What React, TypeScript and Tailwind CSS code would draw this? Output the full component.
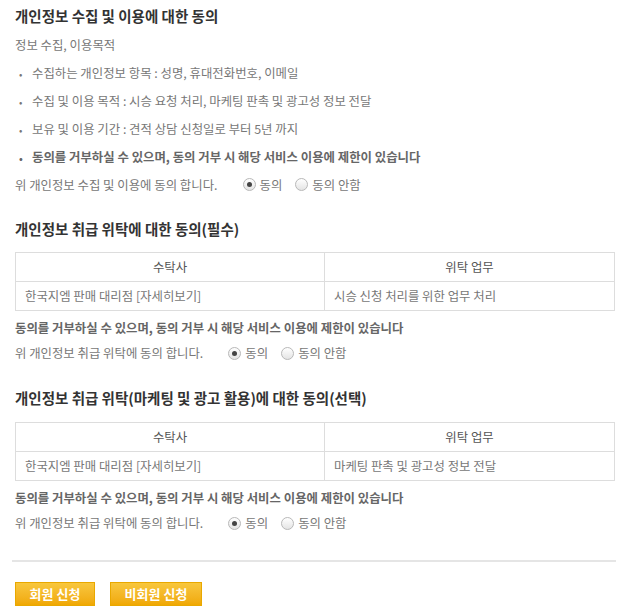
import React, { useState } from 'react'

type Choice = 'yes' | 'no'

function Radio({ checked, label, onClick }: { checked: boolean; label: string; onClick: () => void }) {
  return (
    <button type="button" onClick={onClick} className="flex items-center gap-[4px] text-[#777]">
      <span className="flex h-[13px] w-[13px] items-center justify-center rounded-full border border-[#b8b8b8] bg-gradient-to-b from-white to-[#e4e4e4]">
        {checked && <span className="h-[5px] w-[5px] rounded-full bg-[#444]" />}
      </span>
      <span>{label}</span>
    </button>
  )
}

function AgreeRow({ text, value, onChange, className }: { text: string; value: Choice; onChange: (v: Choice) => void; className: string }) {
  return (
    <div className={`flex items-center text-[12.4px] text-[#777] ${className}`}>
      <span>{text}</span>
      <div className="ml-[25px] flex items-center gap-[13px]">
        <Radio checked={value === 'yes'} label="동의" onClick={() => onChange('yes')} />
        <Radio checked={value === 'no'} label="동의 안함" onClick={() => onChange('no')} />
      </div>
    </div>
  )
}

function TrustTable({ task }: { task: string }) {
  return (
    <table className="w-full border-collapse text-[12.4px]">
      <thead>
        <tr>
          <th className="h-[29px] w-[309px] border border-[#dddddd] font-normal text-[#555]">수탁사</th>
          <th className="h-[29px] border border-[#dddddd] font-normal text-[#555]">위탁 업무</th>
        </tr>
      </thead>
      <tbody>
        <tr>
          <td className="h-[29px] border border-[#dddddd] pl-[9px] text-[#777]">한국지엠 판매 대리점 [자세히보기]</td>
          <td className="h-[29px] border border-[#dddddd] pl-[9px] text-[#777]">{task}</td>
        </tr>
      </tbody>
    </table>
  )
}

export default function App() {
  const [collect, setCollect] = useState<Choice>('yes')
  const [trust, setTrust] = useState<Choice>('yes')
  const [marketing, setMarketing] = useState<Choice>('yes')

  const refuse = '동의를 거부하실 수 있으며, 동의 거부 시 해당 서비스 이용에 제한이 있습니다'

  return (
    <div className="w-[620px] bg-white pr-[5px] pl-[15px] pt-[6px] font-['Noto_Sans_CJK_KR','Noto_Sans',sans-serif]">
      {/* 수집 및 이용 */}
      <h2 className="h-[20px] text-[14.5px] leading-[20px] font-bold text-[#333]">개인정보 수집 및 이용에 대한 동의</h2>
      <p className="mt-[5px] flex h-[28px] items-center text-[12.4px] text-[#777]">정보 수집, 이용목적</p>
      <ul className="text-[12.4px] text-[#777]">
        <li className="flex h-[28px] items-center"><span className="w-[17px] pl-[4px] text-[10px]">•</span>수집하는 개인정보 항목 : 성명, 휴대전화번호, 이메일</li>
        <li className="flex h-[28px] items-center"><span className="w-[17px] pl-[4px] text-[10px]">•</span>수집 및 이용 목적 : 시승 요청 처리, 마케팅 판촉 및 광고성 정보 전달</li>
        <li className="flex h-[28px] items-center"><span className="w-[17px] pl-[4px] text-[10px]">•</span>보유 및 이용 기간 : 견적 상담 신청일로 부터 5년 까지</li>
        <li className="flex h-[28px] items-center font-bold text-[#666]"><span className="w-[17px] pl-[4px] text-[10px]">•</span>{refuse}</li>
      </ul>
      <AgreeRow className="h-[28px]" text="위 개인정보 수집 및 이용에 동의 합니다." value={collect} onChange={setCollect} />

      {/* 취급 위탁 (필수) */}
      <h2 className="mt-[20px] h-[20px] text-[14.5px] leading-[20px] font-bold text-[#333]">개인정보 취급 위탁에 대한 동의(필수)</h2>
      <div className="mt-[13px]">
        <TrustTable task="시승 신청 처리를 위한 업무 처리" />
      </div>
      <p className="mt-[5px] flex h-[25px] items-center text-[12.4px] font-bold text-[#666]">{refuse}</p>
      <AgreeRow className="h-[25px]" text="위 개인정보 취급 위탁에 동의 합니다." value={trust} onChange={setTrust} />

      {/* 취급 위탁 (선택) */}
      <h2 className="mt-[22px] h-[20px] text-[14.5px] leading-[20px] font-bold text-[#333]">개인정보 취급 위탁(마케팅 및 광고 활용)에 대한 동의(선택)</h2>
      <div className="mt-[14px]">
        <TrustTable task="마케팅 판촉 및 광고성 정보 전달" />
      </div>
      <p className="mt-[5px] flex h-[25px] items-center text-[12.4px] font-bold text-[#666]">{refuse}</p>
      <AgreeRow className="h-[25px]" text="위 개인정보 취급 위탁에 동의 합니다." value={marketing} onChange={setMarketing} />

      <div className="mt-[24px] -mr-[1px] -ml-[3px] h-[2px] bg-[#e5e5e5]" />

      <div className="mt-[20px] flex gap-[15px] pb-[9px]">
        <button className="h-[24px] w-[80px] border border-[#e9a800] bg-gradient-to-b from-[#f8c73c] to-[#f0a800] text-[13px] font-bold text-white">회원 신청</button>
        <button className="h-[24px] w-[92px] border border-[#e9a800] bg-gradient-to-b from-[#f8c73c] to-[#f0a800] text-[13px] font-bold text-white">비회원 신청</button>
      </div>
    </div>
  )
}
